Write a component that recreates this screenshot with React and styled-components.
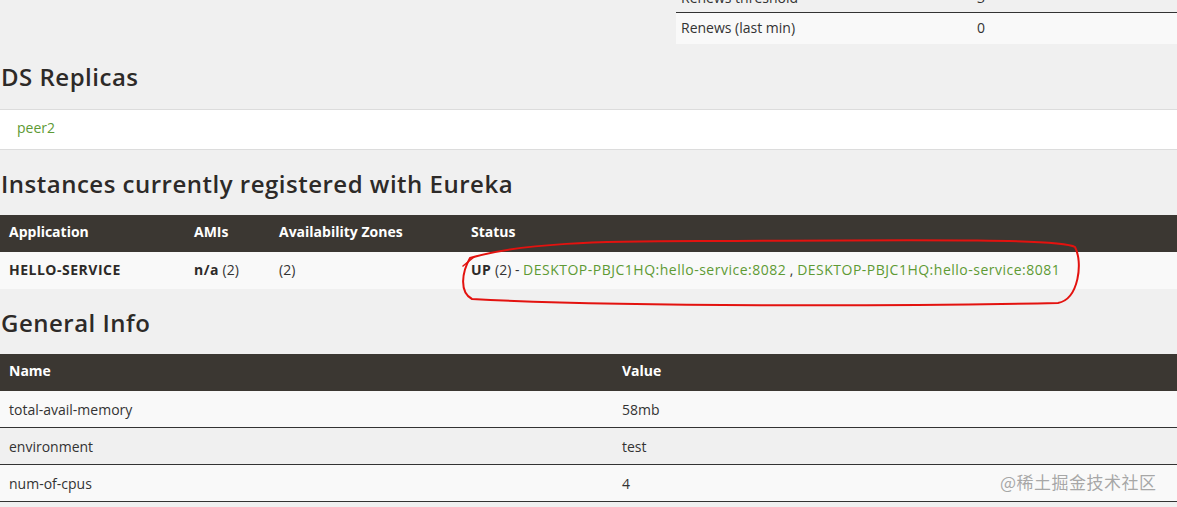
import React from "react";
import styled, { createGlobalStyle } from "styled-components";

const GlobalStyle = createGlobalStyle`
  html, body {
    margin: 0;
    padding: 0;
    background: #f0f0f0;
    overflow: hidden;
  }
  body {
    font-family: "Open Sans", "Liberation Sans", sans-serif;
    color: #333;
  }
`;

const instances = [
  {
    app: "HELLO-SERVICE",
    amis: "n/a",
    amiCount: "(2)",
    zones: "(2)",
    status: "UP",
    statusCount: "(2)",
    links: [
      "DESKTOP-PBJC1HQ:hello-service:8082",
      "DESKTOP-PBJC1HQ:hello-service:8081",
    ],
  },
];

const generalInfo = [
  { name: "total-avail-memory", value: "58mb" },
  { name: "environment", value: "test" },
  { name: "num-of-cpus", value: "4" },
];

function App() {
  return (
    <Page>
      <GlobalStyle />
      <TopTable>
        <TopRow>
          <TopLabel>Renews threshold</TopLabel>
          <TopValue>3</TopValue>
        </TopRow>
        <TopRow light>
          <TopLabel>Renews (last min)</TopLabel>
          <TopValue>0</TopValue>
        </TopRow>
      </TopTable>

      <Heading top={18}>DS Replicas</Heading>
      <ReplicaBox>
        <Link>peer2</Link>
      </ReplicaBox>

      <Heading top={19}>Instances currently registered with Eureka</Heading>
      <Table>
        <HeadRow cols="185px 85px 192px 1fr">
          <Th>Application</Th>
          <Th>AMIs</Th>
          <Th>Availability Zones</Th>
          <Th>Status</Th>
        </HeadRow>
        {instances.map((it) => (
          <BodyRow key={it.app} cols="185px 85px 192px 1fr" light noBorder>
            <Td>
              <b>{it.app}</b>
            </Td>
            <Td>
              <b>{it.amis}</b> {it.amiCount}
            </Td>
            <Td>{it.zones}</Td>
            <Td>
              <b>{it.status}</b> {it.statusCount} -{" "}
              <Link wide>{it.links[0]}</Link> , <Link wide>{it.links[1]}</Link>
            </Td>
          </BodyRow>
        ))}
      </Table>

      <Heading top={19}>General Info</Heading>
      <Table>
        <HeadRow cols="613px 1fr">
          <Th>Name</Th>
          <Th>Value</Th>
        </HeadRow>
        {generalInfo.map((row, i) => (
          <BodyRow key={row.name} cols="613px 1fr" light={i % 2 === 0}>
            <Td>{row.name}</Td>
            <Td>{row.value}</Td>
          </BodyRow>
        ))}
      </Table>

      <Annotation width="1177" height="507" viewBox="0 0 1177 507">
        <path
          d="M 1075 247 C 1060 238, 900 240, 700 241 C 600 241, 520 243, 470 258 C 462 272, 459 292, 472 299 C 620 307, 900 306, 1058 303 C 1079 299, 1083 262, 1075 247"
          fill="none"
          stroke="#e3120f"
          strokeWidth="2"
          strokeLinecap="round"
        />
        <path
          d="M 463 266 L 474 257"
          fill="none"
          stroke="#e3120f"
          strokeWidth="1.6"
          strokeLinecap="round"
        />
      </Annotation>
      <Watermark>@稀土掘金技术社区</Watermark>
    </Page>
  );
}

export default App;

const Page = styled.div`
  position: relative;
  width: 1177px;
  height: 507px;
  overflow: hidden;
`;

const TopTable = styled.div`
  margin-left: 676px;
  margin-top: -18px;
`;

const TopRow = styled.div`
  display: grid;
  grid-template-columns: 296px 1fr;
  height: 31px;
  align-items: center;
  padding-bottom: ${(props) => (props.light ? "3px" : "0")};
  box-sizing: border-box;
  background: ${(props) => (props.light ? "#f9f9f9" : "#f0f0f0")};
  border-bottom: ${(props) => (props.light ? "none" : "1px solid #333")};
  font-size: 14px;
`;

const TopLabel = styled.div`
  padding-left: 5px;
`;

const TopValue = styled.div`
  padding-left: 5px;
`;

const Heading = styled.h2`
  margin: ${(props) => props.top}px 0 0 0;
  padding-left: 1px;
  font-size: 24px;
  line-height: 30px;
  font-weight: 600;
  color: #2d2a28;
  letter-spacing: 0.5px;
`;

const ReplicaBox = styled.div`
  margin-top: 17px;
  background: #fff;
  border: 1px solid #dcdcdc;
  border-left: none;
  border-right: none;
  height: 39px;
  box-sizing: content-box;
  display: flex;
  align-items: center;
  padding: 0 0 0 17px;
  font-size: 14px;

  span {
    margin-top: -4px;
  }
`;

const Link = styled.span`
  color: #5e9a34;
  letter-spacing: ${(props) => (props.wide ? "0.5px" : "0")};
`;

const Table = styled.div`
  margin-top: 16px;
  font-size: 14px;
`;

const HeadRow = styled.div`
  display: grid;
  grid-template-columns: ${(props) => props.cols};
  height: 37px;
  box-sizing: border-box;
  padding-bottom: 5px;
  align-items: center;
  background: #3b3732;
  color: #fff;
  font-weight: 700;
`;

const BodyRow = styled.div`
  display: grid;
  grid-template-columns: ${(props) => props.cols};
  height: ${(props) => (props.noBorder ? "37px" : "36px")};
  box-sizing: content-box;
  align-items: ${(props) => (props.noBorder ? "start" : "center")};
  background: ${(props) => (props.light ? "#f9f9f9" : "#f0f0f0")};
  border-bottom: ${(props) => (props.noBorder ? "none" : "1px solid #333")};
  color: #333;

  & > div {
    padding-top: ${(props) => (props.noBorder ? "8px" : "0")};
  }

  b {
    font-weight: 700;
    color: #2d2a28;
    letter-spacing: 0.5px;
  }
`;

const Th = styled.div`
  padding-left: 9px;
  white-space: nowrap;
`;

const Td = styled.div`
  padding-left: 9px;
  white-space: nowrap;
`;

const Annotation = styled.svg`
  position: absolute;
  left: 0;
  top: 0;
  pointer-events: none;
`;

const Watermark = styled.div`
  position: absolute;
  left: 1000px;
  top: 469px;
  font-family: "Noto Sans CJK SC", sans-serif;
  font-size: 17px;
  color: rgba(130, 130, 130, 0.7);
  letter-spacing: 0.5px;
  white-space: nowrap;
`;
